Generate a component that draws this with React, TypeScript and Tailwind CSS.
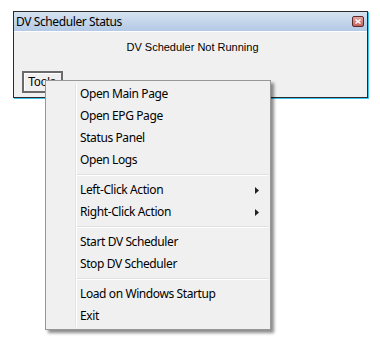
const groups = [
  [{ label: 'Open Main Page' }, { label: 'Open EPG Page' }, { label: 'Status Panel' }, { label: 'Open Logs' }],
  [{ label: 'Left-Click Action', sub: true }, { label: 'Right-Click Action', sub: true }],
  [{ label: 'Start DV Scheduler' }, { label: 'Stop DV Scheduler' }],
  [{ label: 'Load on Windows Startup' }, { label: 'Exit' }],
]

function MenuItem({ label, sub }: { label: string; sub?: boolean }) {
  return (
    <div className="flex items-center h-[22px] pl-[34px] pr-[11px]">
      <span className="flex-1 text-[12px] leading-none tracking-[-0.4px] text-black">{label}</span>
      {sub && (
        <svg width="4" height="7" viewBox="0 0 4 7" className="fill-[#222]">
          <path d="M0 0 L4 3.5 L0 7 Z" />
        </svg>
      )}
    </div>
  )
}

export default function App() {
  return (
    <div className="relative w-[380px] h-[344px] bg-white pt-[11px] pl-[13px] font-['Noto_Sans',sans-serif]">
      {/* Status window */}
      <div className="w-[355px] h-[87px] border border-[#2a2a2a] bg-[#f0f0f0] shadow-[1px_1px_0_#3ec6ee] flex flex-col">
        <div className="h-[20px] flex items-center justify-between pl-[2px] pr-[3px] bg-gradient-to-b from-[#d6e2f1] to-[#b3c9e5] border-b border-white">
          <span className="text-[12px] leading-none tracking-[-0.4px] text-black">DV Scheduler Status</span>
          <div className="w-[12px] h-[11px] border border-[#5a2a2a] rounded-[2px] bg-gradient-to-b from-[#e3a6a0] to-[#c2625c] flex items-center justify-center">
            <svg width="6" height="5" viewBox="0 0 6 5">
              <path d="M0.5 0.5 L5.5 4.5 M5.5 0.5 L0.5 4.5" stroke="white" strokeWidth="1.4" />
            </svg>
          </div>
        </div>
        <div className="flex-1 flex flex-col px-[8px] font-['Liberation_Sans',sans-serif]">
          <div className="text-center text-[11px] leading-none mt-[10px] pl-[4px] text-black">DV Scheduler Not Running</div>
          <div className="mt-[16px]">
            <button className="w-[41px] h-[22px] border-2 border-[#6a6a6a] bg-[#f0f0f0] text-[12px] leading-none text-left pl-[4px] text-black shadow-[inset_1px_1px_0_#fff]">
              Tools
            </button>
          </div>
        </div>
      </div>

      {/* Context menu */}
      <div className="absolute left-[45px] top-[80px] w-[226px] py-[2px] bg-[#f0f0f0] border border-[#979797] shadow-[3px_3px_3px_rgba(0,0,0,0.45)]">
        <div className="absolute left-[29px] top-[2px] bottom-[2px] w-[2px] bg-[#e2e3e3] border-r border-white" />
        {groups.map((g, i) => (
          <div key={i}>
            {i > 0 && (
              <div className="h-[8px] flex items-center pl-[31px] pr-[2px]">
                <div className="w-full h-[2px] bg-[#e0e0e0] border-b border-white" />
              </div>
            )}
            {g.map((it) => (
              <MenuItem key={it.label} label={it.label} sub={(it as { sub?: boolean }).sub} />
            ))}
          </div>
        ))}
      </div>
    </div>
  )
}
